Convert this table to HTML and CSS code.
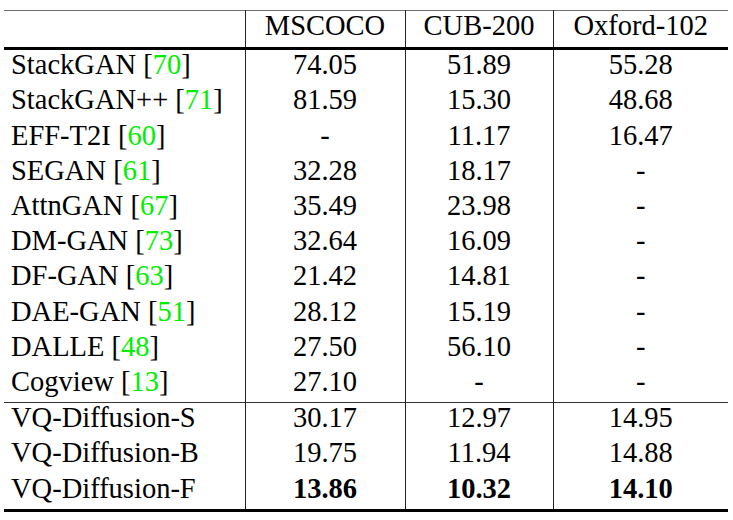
FILE: index.html
```html
<!DOCTYPE html>
<html>
<head>
<meta charset="utf-8">
<link rel="stylesheet" href="styles.css">
</head>
<body>
<table class="results">
  <colgroup>
    <col class="c-method">
    <col class="c-coco">
    <col class="c-cub">
    <col class="c-oxf">
  </colgroup>
  <thead>
    <tr>
      <th class="method"></th>
      <th>MSCOCO</th>
      <th>CUB-200</th>
      <th>Oxford-102</th>
    </tr>
  </thead>
  <tbody class="baselines">
    <tr><td class="method">StackGAN [<span class="cite">70</span>]</td><td>74.05</td><td>51.89</td><td>55.28</td></tr>
    <tr><td class="method">StackGAN++ [<span class="cite">71</span>]</td><td>81.59</td><td>15.30</td><td>48.68</td></tr>
    <tr><td class="method">EFF-T2I [<span class="cite">60</span>]</td><td>-</td><td>11.17</td><td>16.47</td></tr>
    <tr><td class="method">SEGAN [<span class="cite">61</span>]</td><td>32.28</td><td>18.17</td><td>-</td></tr>
    <tr><td class="method">AttnGAN [<span class="cite">67</span>]</td><td>35.49</td><td>23.98</td><td>-</td></tr>
    <tr><td class="method">DM-GAN [<span class="cite">73</span>]</td><td>32.64</td><td>16.09</td><td>-</td></tr>
    <tr><td class="method">DF-GAN [<span class="cite">63</span>]</td><td>21.42</td><td>14.81</td><td>-</td></tr>
    <tr><td class="method">DAE-GAN [<span class="cite">51</span>]</td><td>28.12</td><td>15.19</td><td>-</td></tr>
    <tr><td class="method">DALLE [<span class="cite">48</span>]</td><td>27.50</td><td>56.10</td><td>-</td></tr>
    <tr><td class="method">Cogview [<span class="cite">13</span>]</td><td>27.10</td><td>-</td><td>-</td></tr>
  </tbody>
  <tbody class="ours">
    <tr><td class="method">VQ-Diffusion-S</td><td>30.17</td><td>12.97</td><td>14.95</td></tr>
    <tr><td class="method">VQ-Diffusion-B</td><td>19.75</td><td>11.94</td><td>14.88</td></tr>
    <tr><td class="method">VQ-Diffusion-F</td><td class="best">13.86</td><td class="best">10.32</td><td class="best">14.10</td></tr>
  </tbody>
</table>
</body>
</html>
```

FILE: styles.css
```css
html, body {
  margin: 0;
  padding: 0;
  background: #ffffff;
}

body {
  padding: 10px 0 0 4px;
  font-family: "Liberation Serif", "Times New Roman", serif;
  color: #000000;
}

.results {
  border-collapse: collapse;
  table-layout: fixed;
  width: 724px;
  font-size: 28.5px;
  border-top: 1px solid #6f6f6f;
  border-bottom: 3px solid #000000;
}

.c-method { width: 241px; }
.c-coco { width: 160px; }
.c-cub { width: 148px; }
.c-oxf { width: 175px; }

.results th,
.results td {
  padding: 0 0 5px 0;
  line-height: 30.2px;
  text-align: center;
  font-weight: normal;
  white-space: nowrap;
  border-left: 1px solid #222222;
}

.results th {
  height: 30px;
  padding-bottom: 6px;
}

.results th.method,
.results td.method {
  border-left: none;
  text-align: left;
  padding-left: 7px;
}

.results thead tr {
  border-bottom: 3px solid #000000;
}

.ours tr:first-child {
  border-top: 1px solid #333333;
}

.cite {
  color: #00ee00;
}

.results td.best {
  font-weight: bold;
}
```
